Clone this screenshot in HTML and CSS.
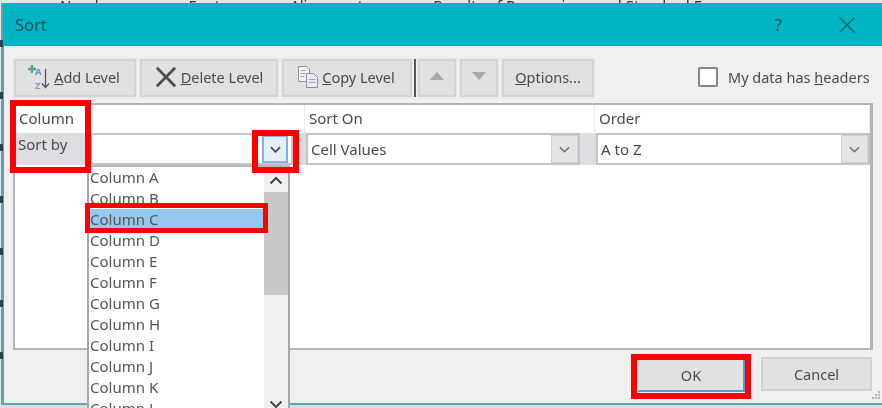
FILE: index.html
```html
<!DOCTYPE html>
<html lang="en">
<head>
<meta charset="utf-8">
<title>Sort</title>
<link rel="stylesheet" href="styles.css">
</head>
<body>
<div class="stage">
  <div class="behind-top"><span>Number</span><span>Font</span><span>Alignment</span><span>Results of Regressions and Standard Errors</span></div>
  <div class="dialog">
    <header class="titlebar">
      <span class="title">Sort</span>
      <span class="help">?</span>
      <svg class="close" width="18" height="18" viewBox="0 0 18 18"><path d="M1.500 1.500 16.500 16.500M16.500 1.500 1.500 16.500"/></svg>
    </header>
    <div class="toolbar">
      <button class="btn btn-add">
        <svg width="24" height="26" viewBox="0 0 24 26">
          <path class="i-plus" d="M5 1v8M1 5h8"/>
          <text class="i-a" x="8" y="11">A</text>
          <text class="i-z" x="8" y="25">Z</text>
          <path class="i-arrow" d="M18.500 5v18M15 19.500l3.500 4 3.500-4"/>
        </svg>
        <span><u>A</u>dd Level</span>
      </button>
      <button class="btn btn-del">
        <svg width="22" height="22" viewBox="0 0 24 24"><path class="i-x" d="M2 2 22 22M22 2 2 22"/></svg>
        <span><u>D</u>elete Level</span>
      </button>
      <button class="btn btn-copy">
        <svg width="22" height="24" viewBox="0 0 22 24">
          <path class="i-doc" d="M1.500 1.500h8l3 3v12h-11z"/>
          <path class="i-doc i-front" d="M9.500 8.500h7l4 4v10h-11z"/>
          <path class="i-lines" d="M3.500 5.500h5M3.500 8.500h5M3.500 11.500h4M11.500 14.500h7M11.500 17.500h7"/>
        </svg>
        <span><u>C</u>opy Level</span>
      </button>
      <span class="tool-sep"></span>
      <button class="btn btn-move"><svg width="14" height="8" viewBox="0 0 14 8"><path class="i-tri" d="M7 0 14 8H0z"/></svg></button>
      <button class="btn btn-move"><svg width="14" height="8" viewBox="0 0 14 8"><path class="i-tri" d="M0 0H14L7 8z"/></svg></button>
      <button class="btn btn-opt"><span><u>O</u>ptions...</span></button>
      <label class="headers"><span class="check"></span><span>My data has <u>h</u>eaders</span></label>
    </div>
    <div class="levels">
      <div class="level-head">
        <span class="cell-col">Column</span>
        <span class="cell-on">Sort On</span>
        <span class="cell-order">Order</span>
      </div>
      <div class="level-row">
        <span class="row-label">Sort by</span>
        <div class="combo combo-col"><span></span><span class="drop drop-active"><svg width="11" height="7" viewBox="0 0 12 7"><path d="M1 1l5 5 5-5"/></svg></span></div>
        <div class="combo combo-on"><span>Cell Values</span><span class="drop"><svg width="11" height="7" viewBox="0 0 12 7"><path d="M1 1l5 5 5-5"/></svg></span></div>
        <div class="combo combo-order"><span>A to Z</span><span class="drop"><svg width="11" height="7" viewBox="0 0 12 7"><path d="M1 1l5 5 5-5"/></svg></span></div>
      </div>
    </div>
    <footer class="footer">
      <button class="btn-foot btn-ok">OK</button>
      <button class="btn-foot btn-cancel">Cancel</button>
    </footer>
    <svg class="grip" width="8" height="8" viewBox="0 0 8 8"><path d="M6 0h2v2H6zM3 3h2v2H3zM6 3h2v2H6zM0 6h2v2H0zM3 6h2v2H3zM6 6h2v2H6z"/></svg>
  </div>
  <div class="behind-bottom"></div>
  <span class="behind-left"></span>

  <div class="list">
    <ul class="list-items">
      <li>Column A</li>
      <li>Column B</li>
      <li class="selected">Column C</li>
      <li>Column D</li>
      <li>Column E</li>
      <li>Column F</li>
      <li>Column G</li>
      <li>Column H</li>
      <li>Column I</li>
      <li>Column J</li>
      <li>Column K</li>
      <li>Column L</li>
    </ul>
    <div class="scroll">
      <svg class="arrow-up" width="14" height="9" viewBox="0 0 14 9"><path d="M1.500 7.500 7 2l5.500 5.500"/></svg>
      <span class="thumb"></span>
      <svg class="arrow-down" width="14" height="9" viewBox="0 0 14 9"><path d="M1.500 1.500 7 7l5.500-5.500"/></svg>
    </div>
  </div>

  <span class="mark mark-col"></span>
  <span class="mark mark-drop"></span>
  <span class="mark mark-item"></span>
  <span class="mark mark-ok"></span>
</div>
</body>
</html>
```

FILE: styles.css
```css
* { box-sizing: border-box; }
html, body { margin: 0; padding: 0; background: #fff; overflow: hidden; }
body { font-family: "Noto Sans", "Open Sans", sans-serif; color: #4a4a4a; }
.stage { position: relative; width: 882px; height: 408px; overflow: hidden; filter: blur(0.5px); background: #e8e8e8; }

.behind-top { height: 3px; overflow: hidden; display: flex; align-items: flex-end; gap: 70px; padding-left: 60px; font-size: 15px; line-height: 10px; color: #333; white-space: nowrap; background: #e6e6e6; }
.behind-top span { position: relative; top: 7px; }
.behind-bottom { height: 3px; background: #dcdcdc; }
.behind-left { position: absolute; left: 0; top: 40px; width: 3px; height: 360px; background: repeating-linear-gradient(to bottom, #2c4650 0 7px, transparent 7px 52px); }

.dialog { position: relative; margin-left: 1px; height: 402px; background: #f0f0f0; border-left: 3px solid #5ba3b5; border-bottom: 2px solid #5ba6b6; display: flex; flex-direction: column; }
.titlebar { height: 43px; flex: none; margin-left: -1px; background: #00b5c3; display: flex; align-items: center; color: #17505a; padding: 0 26px 0 12px; }
.title { font-size: 16.500px; flex: 1; }
.help { font-size: 17px; margin-right: 56px; }
.close { fill: none; stroke: #1a5a66; stroke-width: 1.4; }

.toolbar { height: 38px; margin: 13px 0 0 10px; display: flex; align-items: stretch; gap: 4px; flex: none; }
.btn { border: 2px solid #d4d4d4; background: #e1e1e1; color: #4a4a4a; font: inherit; font-size: 14.500px; padding: 0 0 2px; display: flex; align-items: center; justify-content: center; gap: 2px; outline: 1px solid #e8e8e8; }
.btn-add { width: 122px; gap: 3px; padding-right: 3px; }
.btn-del { width: 138px; gap: 4px; }
.btn-copy { width: 130px; gap: 3px; padding-right: 2px; }
.btn-move { width: 38px; padding-bottom: 4px; }
.btn-opt { width: 92px; }
.tool-sep { width: 2px; margin: 0 -2px; background: #555; }
.i-plus { fill: none; stroke: #4fa884; stroke-width: 2.400; }
.i-a { font-size: 9.500px; font-weight: 700; fill: #5b8fd0; font-family: "Noto Sans", sans-serif; }
.i-z { font-size: 9.500px; font-weight: 700; fill: #a98ad2; font-family: "Noto Sans", sans-serif; }
.i-arrow { fill: none; stroke: #555; stroke-width: 1.300; }
.i-x { fill: none; stroke: #4d4d4d; stroke-width: 3; }
.i-doc { fill: #f4f4f4; stroke: #8a8f98; stroke-width: 1; }
.i-front { fill: #e6eff8; }
.i-lines { fill: none; stroke: #9aa0a8; stroke-width: 1; }
.i-tri { fill: #a8a8a8; }

.headers { margin-left: 100px; display: flex; align-items: center; gap: 10px; font-size: 14.500px; white-space: nowrap; padding-bottom: 2px; }
.check { width: 20px; height: 20px; background: #fff; border: 2px solid #858585; border-radius: 2px; }

.levels { margin: 6px 0 0 9px; width: 860px; height: 247px; flex: none; background: #fff; border: 2px solid #b4b4b8; border-right-width: 3px; }
.level-head { height: 28px; display: grid; grid-template-columns: 290px 290px 1fr; font-size: 15px; align-items: center; }
.level-head span { height: 100%; display: flex; align-items: center; padding: 0 0 2px 4px; border-right: 1px solid #ececf0; }
.level-row { height: 32px; background: #dcdce2; display: grid; grid-template-columns: 75px 216px 274px 16px 1fr; font-size: 15px; align-items: stretch; }
.row-label { grid-column: 1; padding: 0 0 0 3px; line-height: 22px; }
.combo { background: #fff; border: 2px solid #c4c4c8; display: flex; align-items: center; justify-content: space-between; padding-left: 3px; }
.combo-col { margin-right: 13px; }
.combo-on { grid-column: 3; }
.combo-order { grid-column: 5; }
.drop { width: 27px; height: 100%; background: #e4e4e4; border: 1px solid #d2d2d2; display: flex; align-items: center; justify-content: center; flex: none; }
.drop svg path { fill: none; stroke: #6a6a6a; stroke-width: 1.500; }
.drop-active { width: 26px; margin-right: 3px; background: #e3effb; border: 2px solid #7fb5e6; }
.drop-active svg path { stroke: #444; stroke-width: 1.800; }

.footer { display: flex; justify-content: flex-end; align-items: flex-start; padding: 7px 10px 0 0; gap: 16px; flex: 1; }
.btn-foot { font: inherit; font-size: 14.500px; color: #4a4a4a; height: 34px; background: #e1e1e1; border: 2px solid #d2d2d2; padding: 0; }
.btn-ok { width: 108px; height: 35px; margin-top: 0; border-color: #e1e1e1 #4a9ee0 #4a9ee0 #e1e1e1; }
.btn-cancel { width: 111px; }
.grip { position: absolute; right: 2px; bottom: 4px; fill: #b0b8bc; }

.list { position: absolute; left: 87px; top: 165px; width: 203px; height: 250px; background: #fff; border: 2px solid #a8a8a8; border-top-color: #b8b8b8; display: flex; }
.list-items { list-style: none; margin: 0; padding: 0; flex: 1; font-size: 15px; line-height: 21px; color: #555; }
.list-items li { height: 21px; padding-left: 1px; white-space: nowrap; }
.selected { background: #96c8ee; }
.scroll { width: 24px; flex: none; background: #f0f0f0; display: flex; flex-direction: column; align-items: center; position: relative; }
.thumb { display: block; width: 100%; height: 103px; background: #c9c9c9; margin-top: 7px; }
.arrow-up { margin-top: 9px; flex: none; }
.arrow-up, .arrow-down { fill: none; stroke: #444; stroke-width: 2; }
.arrow-down { position: absolute; left: 5px; top: 233px; }

.mark { position: absolute; border: 6px solid #ff0000; pointer-events: none; }
.mark-col { left: 10px; top: 100px; width: 81px; height: 73px; }
.mark-drop { left: 252px; top: 130px; width: 47px; height: 43px; }
.mark-item { left: 85px; top: 203px; width: 183px; height: 30px; border-width: 5px; }
.mark-ok { left: 631px; top: 354px; width: 120px; height: 45px; }
```
